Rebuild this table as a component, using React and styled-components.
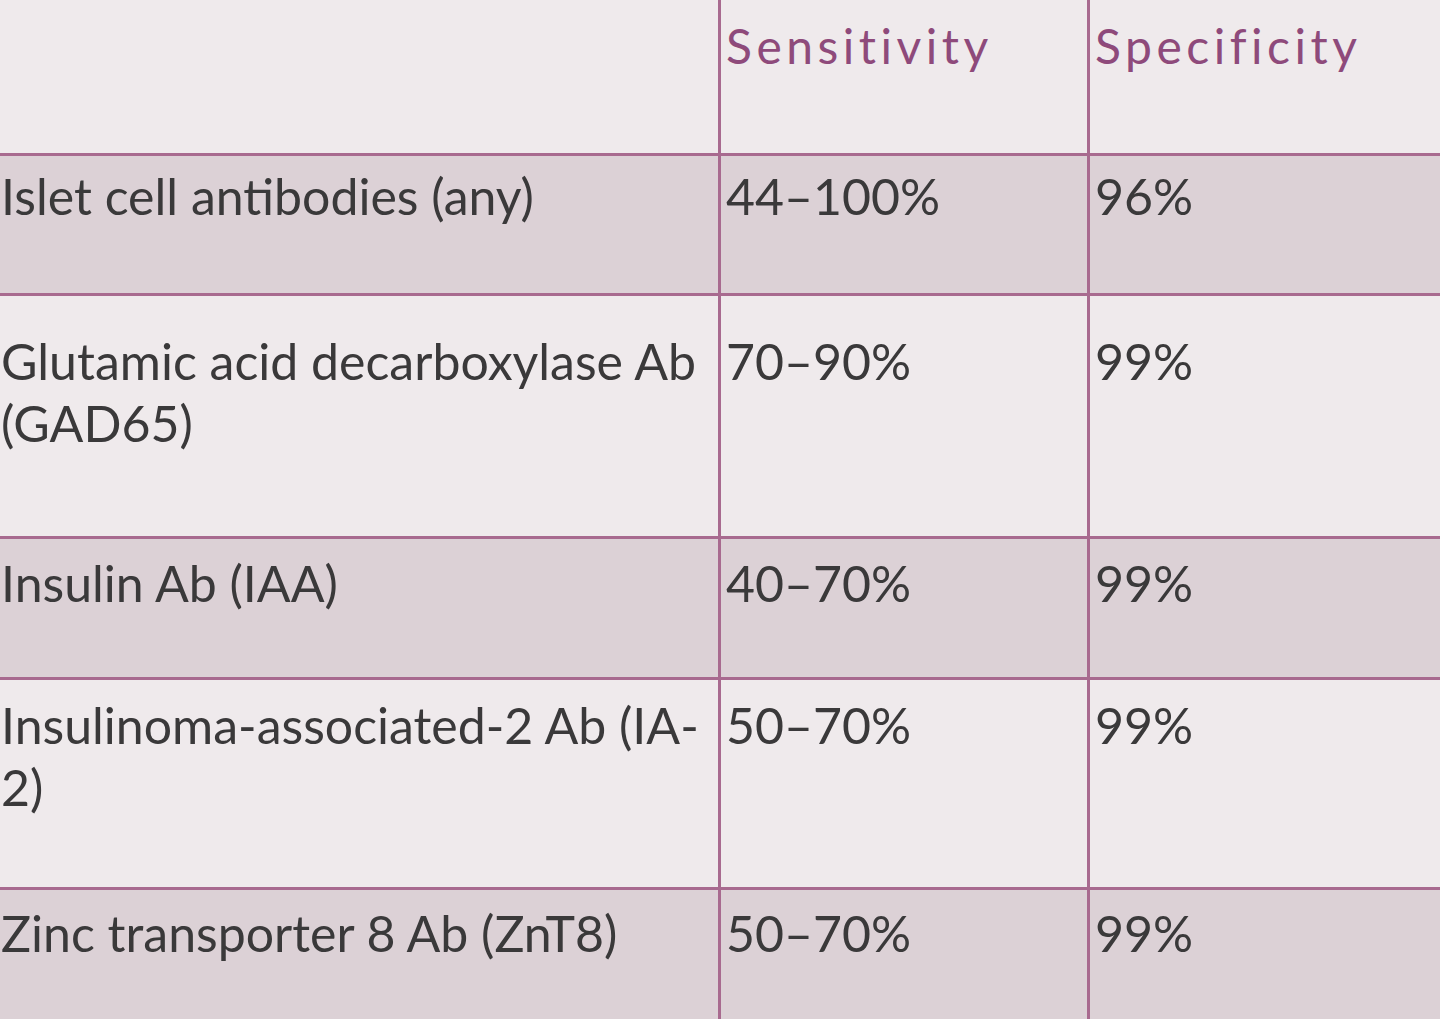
import React from "react";
import styled, { createGlobalStyle } from "styled-components";

const Global = createGlobalStyle`
  html, body { margin: 0; padding: 0; background: #efeaec; }
  body { width: 1440px; height: 1019px; overflow: hidden; }
`;

const Table = styled.div`
  display: grid;
  grid-template-columns: 718px 369px 353px;
  width: 1440px;
  font-family: Lato, "Open Sans", sans-serif;
`;

const Cell = styled.div`
  box-sizing: border-box;
  height: ${(p) => p.$h}px;
  padding: ${(p) => p.$pt}px 4px 0 ${(p) => (p.$first ? 1 : 5)}px;
  background: ${(p) => (p.$shade ? "#dcd1d6" : "#efeaec")};
  border-left: ${(p) => (p.$first ? "none" : "3px solid #a86a8f")};
  border-top: ${(p) => (p.$top ? "3px solid #a86a8f" : "none")};
  font-size: 50px;
  line-height: 62px;
  color: #3a393a;
`;

const Head = styled(Cell)`
  color: #8e4a7b;
  letter-spacing: 4.5px;
  font-size: 48px;
`;

const rows = [
  { a: "Islet cell antibodies (any)", b: "44–100%", c: "96%", h: 140, pt: 9, shade: true },
  { a: "Glutamic acid decarboxylase Ab (GAD65)", b: "70–90%", c: "99%", h: 243, pt: 34 },
  { a: "Insulin Ab (IAA)", b: "40–70%", c: "99%", h: 141, pt: 13, shade: true },
  { a: "Insulinoma-associated-2 Ab (IA-2)", b: "50–70%", c: "99%", h: 210, pt: 14 },
  { a: "Zinc transporter 8 Ab (ZnT8)", b: "50–70%", c: "99%", h: 140, pt: 12, shade: true },
];

export default function App() {
  return (
    <>
      <Global />
      <Table>
        <Head $first $h={153} $pt={15} />
        <Head $h={153} $pt={15}>Sensitivity</Head>
        <Head $h={153} $pt={15}>Specificity</Head>
        {rows.map((r, i) => (
          <React.Fragment key={i}>
            <Cell $first $top $h={r.h} $pt={r.pt} $shade={r.shade}>{r.a}</Cell>
            <Cell $top $h={r.h} $pt={r.pt} $shade={r.shade}>{r.b}</Cell>
            <Cell $top $h={r.h} $pt={r.pt} $shade={r.shade}>{r.c}</Cell>
          </React.Fragment>
        ))}
      </Table>
    </>
  );
}
